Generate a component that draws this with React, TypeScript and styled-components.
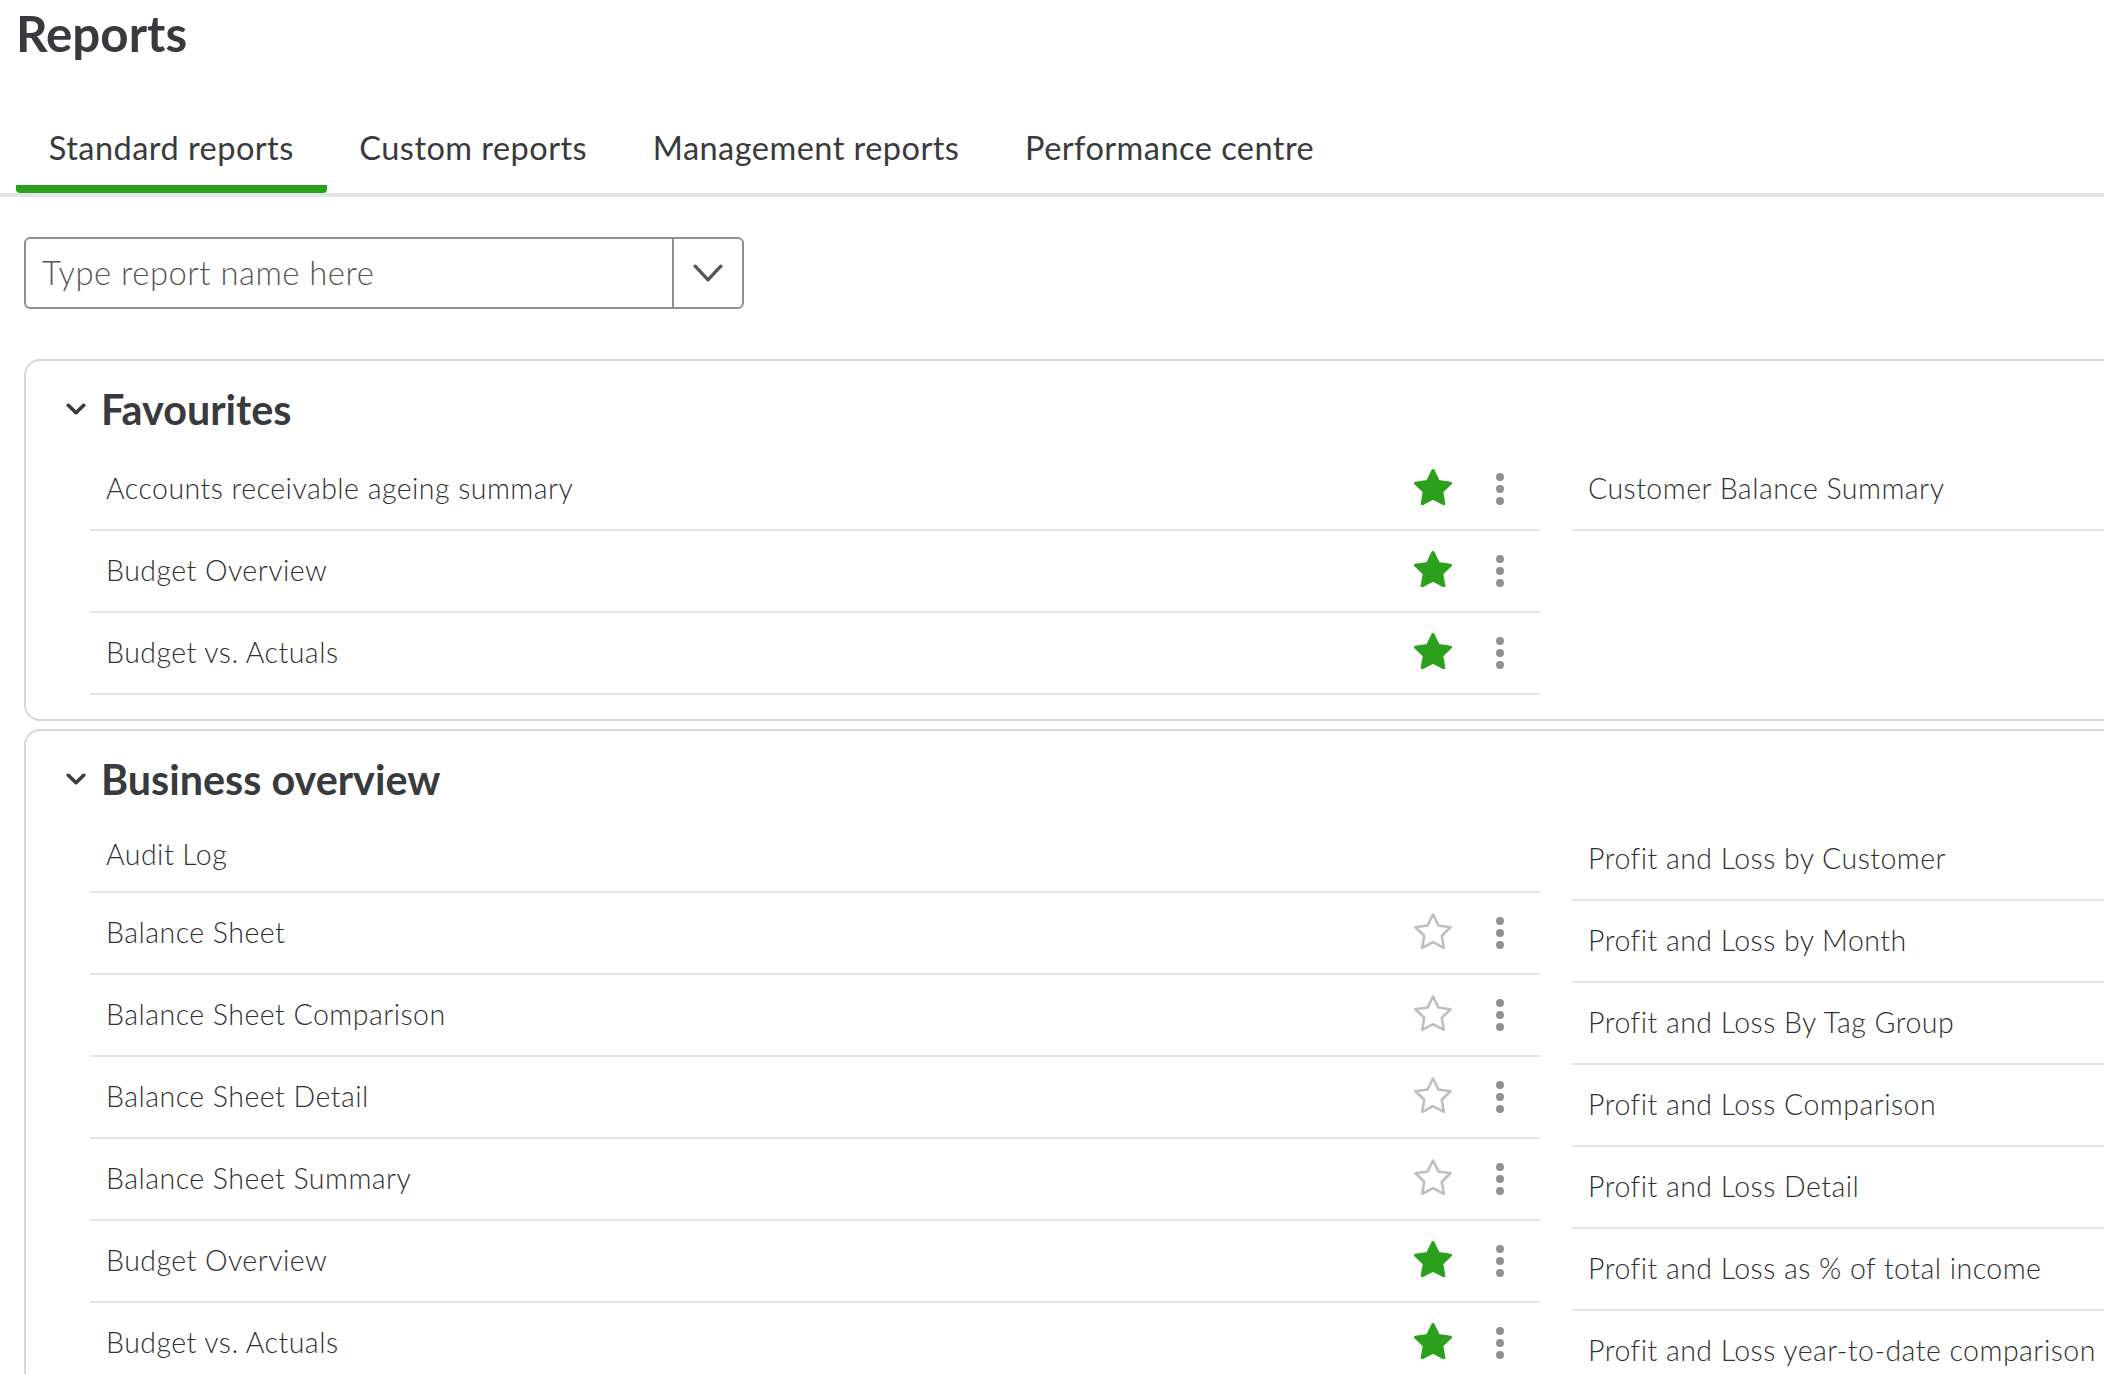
import React from "react";
import styled, { createGlobalStyle } from "styled-components";

const Global = createGlobalStyle`
  html, body { margin: 0; padding: 0; background: #fff; overflow: hidden; }
  body { font-family: "Lato", "Noto Sans", sans-serif; color: #393a3d; }
`;

const Page = styled.div`
  width: 2104px;
  height: 1374px;
  overflow: hidden;
  box-sizing: border-box;
`;

const Title = styled.h1`
  margin: 0;
  padding: 5px 0 0 16px;
  height: 88px;
  box-sizing: border-box;
  font-size: 49.3px;
  line-height: 56px;
  font-weight: 700;
  color: #393a3d;
`;

const TabBar = styled.div`
  display: flex;
  padding: 20px 0 0 16px;
  height: 109px;
  box-sizing: border-box;
  border-bottom: 4px solid #e3e5e8;
`;

const Tab = styled.div<{ $active?: boolean }>`
  height: 85px;
  box-sizing: border-box;
  padding: 0 32.8px;
  font-size: 32.5px;
  line-height: 79px;
  letter-spacing: 0.47px;
  white-space: nowrap;
  color: #393a3d;
  border-bottom: 8px solid ${(p) => (p.$active ? "#2ca01c" : "transparent")};
  border-radius: 0 0 4px 4px;
`;

const Search = styled.div`
  display: flex;
  margin: 40px 0 50px 24px;
  width: 720px;
  height: 72px;
  box-sizing: border-box;
  border: 2px solid #8d9096;
  border-radius: 6px;
`;

const SearchText = styled.div`
  flex: 1;
  padding-left: 16px;
  font-size: 32.8px;
  font-weight: 300;
  line-height: 68px;
  letter-spacing: 0.5px;
  color: #55565b;
`;

const SearchToggle = styled.div`
  width: 68px;
  display: flex;
  align-items: center;
  justify-content: center;
  border-left: 2px solid #8d9096;
`;

const Panel = styled.section`
  margin: 0 0 8px 24px;
  width: 3020px;
  box-sizing: border-box;
  border: 2px solid #d4d7dc;
  border-radius: 16px;
  padding: 0 0 24px 64px;
`;

const PanelHead = styled.div`
  display: flex;
  align-items: center;
  box-sizing: border-box;
  height: 88px;
  padding-top: 7px;
  margin-left: -24px;
  gap: 15px;
`;

const PanelTitle = styled.h2`
  margin: 0;
  font-size: 41.3px;
  line-height: 50px;
  font-weight: 700;
  color: #393a3d;
`;

const Columns = styled.div`
  display: grid;
  grid-template-columns: 1450px 1450px;
  column-gap: 32px;
  align-items: start;
`;

const Column = styled.div`
  display: flex;
  flex-direction: column;
`;

const Row = styled.div<{ $short?: boolean }>`
  display: flex;
  align-items: center;
  height: ${(p) => (p.$short ? 74 : 82)}px;
  box-sizing: border-box;
  padding: 0 36px 0 16px;
  border-bottom: 2px solid #e3e5e8;
`;

const RowLabel = styled.span`
  font-size: 28.5px;
  font-weight: 300;
  letter-spacing: 0.47px;
  margin-bottom: 2px;
  color: #2f3033;
  white-space: nowrap;
`;

const Actions = styled.div`
  margin-left: auto;
  display: flex;
  align-items: center;
  gap: 44px;
`;

const StarIcon = styled.svg`
  display: block;
  margin-bottom: 4px;
`;

const Chevron = ({ w, h, sw, color }: { w: number; h: number; sw: number; color: string }) => (
  <svg width={w} height={h} viewBox={`0 0 ${w} ${h}`} fill="none" style={{ display: "block" }}>
    <polyline
      points={`${sw / 2 + 0.5},${sw / 2 + 0.5} ${w / 2},${h - sw / 2 - 0.5} ${w - sw / 2 - 0.5},${sw / 2 + 0.5}`}
      stroke={color}
      strokeWidth={sw}
      strokeLinecap="round"
      strokeLinejoin="round"
    />
  </svg>
);

const STAR = "19,1.5 24.41,12.46 36.5,14.21 27.75,22.74 29.82,34.79 19,29.1 8.18,34.79 10.25,22.74 1.5,14.21 13.59,12.46";

const Star = ({ on }: { on: boolean }) => (
  <StarIcon width={38} height={36} viewBox="0 0 38 36">
    <polygon
      points={STAR}
      fill={on ? "#2ca01c" : "none"}
      stroke={on ? "#2ca01c" : "#babec5"}
      strokeWidth={on ? 3 : 2.6}
      strokeLinejoin="round"
    />
  </StarIcon>
);

const Dots = () => (
  <svg width={8} height={32} viewBox="0 0 8 32" style={{ display: "block" }}>
    <circle cx={4} cy={4} r={4} fill="#8d9096" />
    <circle cx={4} cy={16} r={4} fill="#8d9096" />
    <circle cx={4} cy={28} r={4} fill="#8d9096" />
  </svg>
);

type Item = { label: string; star?: boolean; plain?: boolean; short?: boolean };

const ReportRow = ({ label, star, plain, short }: Item) => (
  <Row $short={short}>
    <RowLabel>{label}</RowLabel>
    {!plain && (
      <Actions>
        <Star on={!!star} />
        <Dots />
      </Actions>
    )}
  </Row>
);

const tabs = ["Standard reports", "Custom reports", "Management reports", "Performance centre"];

const favLeft: Item[] = [
  { label: "Accounts receivable ageing summary", star: true },
  { label: "Budget Overview", star: true },
  { label: "Budget vs. Actuals", star: true },
];
const favRight: Item[] = [{ label: "Customer Balance Summary", plain: true }];

const bizLeft: Item[] = [
  { label: "Audit Log", plain: true, short: true },
  { label: "Balance Sheet", star: false },
  { label: "Balance Sheet Comparison", star: false },
  { label: "Balance Sheet Detail", star: false },
  { label: "Balance Sheet Summary", star: false },
  { label: "Budget Overview", star: true },
  { label: "Budget vs. Actuals", star: true },
];
const bizRight: Item[] = [
  "Profit and Loss by Customer",
  "Profit and Loss by Month",
  "Profit and Loss By Tag Group",
  "Profit and Loss Comparison",
  "Profit and Loss Detail",
  "Profit and Loss as % of total income",
  "Profit and Loss year-to-date comparison",
].map((label) => ({ label, plain: true }));

const ReportPanel = ({ title, left, right }: { title: string; left: Item[]; right: Item[] }) => (
  <Panel>
    <PanelHead>
      <Chevron w={20} h={12} sw={3.6} color="#393a3d" />
      <PanelTitle>{title}</PanelTitle>
    </PanelHead>
    <Columns>
      <Column>
        {left.map((i) => (
          <ReportRow key={i.label} {...i} />
        ))}
      </Column>
      <Column>
        {right.map((i) => (
          <ReportRow key={i.label} {...i} />
        ))}
      </Column>
    </Columns>
  </Panel>
);

export default function App() {
  return (
    <Page>
      <Global />
      <Title>Reports</Title>
      <TabBar>
        {tabs.map((t, i) => (
          <Tab key={t} $active={i === 0}>
            {t}
          </Tab>
        ))}
      </TabBar>
      <Search>
        <SearchText>Type report name here</SearchText>
        <SearchToggle>
          <Chevron w={30} h={18} sw={3.4} color="#55565b" />
        </SearchToggle>
      </Search>
      <ReportPanel title="Favourites" left={favLeft} right={favRight} />
      <ReportPanel title="Business overview" left={bizLeft} right={bizRight} />
    </Page>
  );
}
